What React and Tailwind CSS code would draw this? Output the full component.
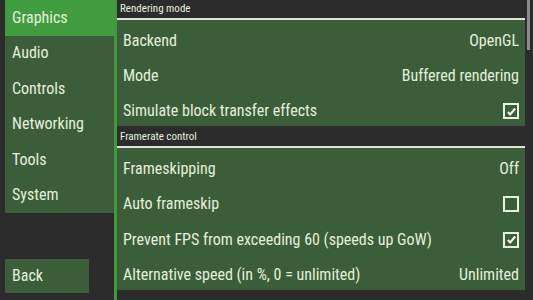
import React from 'react';

const tabs = ['Graphics', 'Audio', 'Controls', 'Networking', 'Tools', 'System'];

const sections = [
  {
    title: 'Rendering mode',
    rows: [
      { label: 'Backend', value: 'OpenGL' },
      { label: 'Mode', value: 'Buffered rendering' },
      { label: 'Simulate block transfer effects', check: true },
    ],
  },
  {
    title: 'Framerate control',
    rows: [
      { label: 'Frameskipping', value: 'Off' },
      { label: 'Auto frameskip', check: false },
      { label: 'Prevent FPS from exceeding 60 (speeds up GoW)', check: true },
      { label: 'Alternative speed (in %, 0 = unlimited)', value: 'Unlimited' },
    ],
  },
];

const CheckBox = ({ checked }) => (
  <div className="w-[16px] h-[16px] border-2 border-[#e8f3e0] flex items-center justify-center">
    {checked && (
      <svg viewBox="0 0 12 12" className="w-[11px] h-[11px]" fill="none" stroke="#f2f8ee" strokeWidth="2.4">
        <path d="M2 6.5l2.6 2.7L10 2.8" />
      </svg>
    )}
  </div>
);

export default function App() {
  return (
    <div
      className="w-[533px] h-[300px] bg-[#2c2c2c] flex overflow-hidden text-[#e4f0dc]"
      style={{ fontFamily: '"Roboto Condensed", "Liberation Sans Narrow", "DejaVu Sans Condensed", Roboto, sans-serif' }}
    >
      <aside className="w-[109px] ml-[5px] flex flex-col shrink-0">
        {tabs.map((t, i) => (
          <div
            key={t}
            className={`h-[35.5px] flex items-center pl-[7px] text-[16px] ${i === 0 ? 'bg-[#429c40]' : 'bg-[#3c5d3a]'}`}
          >
            {t}
          </div>
        ))}
        <div className="flex-1" />
        <div className="w-[84px] h-[34px] mb-[7px] bg-[#3c5d3a] flex items-center pl-[7px] text-[16px]">Back</div>
      </aside>
      <div className="w-[3px] bg-[#3f9a3d] shrink-0" />
      <main className="w-[408px] shrink-0 flex flex-col">
        {sections.map((s, si) => (
          <section key={s.title} className={si === 1 ? 'mt-[2px]' : ''}>
            <div className="h-[20px] flex items-center pl-[3px] text-[11px] border-b-2 border-[#dde7d6]">{s.title}</div>
            <div className="bg-[#3c5d3a]">
              {s.rows.map((r) => (
                <div key={r.label} className="h-[35.4px] flex items-center justify-between pt-[6px] pl-[6px] pr-[6px] text-[16px]">
                  <span>{r.label}</span>
                  {r.value !== undefined ? <span>{r.value}</span> : <CheckBox checked={r.check} />}
                </div>
              ))}
            </div>
          </section>
        ))}
      </main>
      <div className="ml-[2px] w-[3px] h-[50px] bg-[#8a8a8a] shrink-0" />
    </div>
  );
}
